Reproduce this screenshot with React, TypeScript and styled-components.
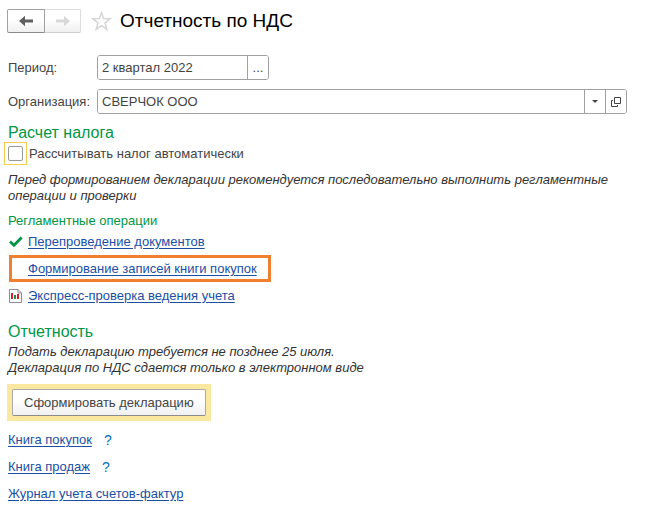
import React from "react";
import styled, { createGlobalStyle } from "styled-components";

const GlobalStyle = createGlobalStyle`
  * { box-sizing: border-box; }
  body {
    margin: 0;
    background: #fff;
    color: #444;
    font: 13px/16px "Liberation Sans", Arial, sans-serif;
  }
  button, input { font: inherit; color: inherit; }
`;

const Page = styled.main`
  padding: 9px 27px 5px 8px;
`;

const Header = styled.header`
  display: flex;
  align-items: center;
  height: 24px;
  margin: 0 0 22px -1px;
`;

const NavGroup = styled.div`
  display: flex;
  height: 24px;
  margin-right: 10px;
`;

const NavButton = styled.button<{ $side: "left" | "right" }>`
  display: flex;
  align-items: center;
  justify-content: center;
  width: ${(p) => (p.$side === "left" ? "38px" : "36px")};
  padding: 0;
  border: 1px solid ${(p) => (p.$side === "left" ? "#a0a0a0" : "#dcdcdc")};
  border-bottom-color: ${(p) => (p.$side === "left" ? "#8a8a8a" : "#d0d0d0")};
  border-left-width: ${(p) => (p.$side === "left" ? "1px" : "0")};
  border-radius: ${(p) => (p.$side === "left" ? "2px 0 0 2px" : "0 2px 2px 0")};
  background: linear-gradient(#fff 40%, #f0f0f0);
  color: ${(p) => (p.$side === "left" ? "#606060" : "#d8d8d8")};
`;

const StarButton = styled.button`
  display: flex;
  padding: 0;
  margin-right: 8px;
  border: 0;
  background: none;
`;

const Title = styled.h1`
  margin: 0;
  color: #000;
  font-size: 19px;
  font-weight: 400;
  line-height: 24px;
`;

const FieldRow = styled.div`
  display: grid;
  grid-template-columns: 89px minmax(0, 1fr);
  align-items: center;
  margin-bottom: 9px;
`;

const Field = styled.div<{ $width?: string }>`
  display: flex;
  width: ${(p) => p.$width ?? "100%"};
  height: 25px;
  border: 1px solid #a0a0a0;
  border-radius: 3px;
  overflow: hidden;
`;

const FieldInput = styled.input`
  flex: 1;
  min-width: 0;
  padding: 0 4px;
  border: 0;
  outline: 0;
  background: #fff;
`;

const FieldButton = styled.button`
  display: flex;
  align-items: center;
  justify-content: center;
  width: 21px;
  padding: 0;
  border: 0;
  border-left: 1px solid #a0a0a0;
  background: #fff;
`;

const Heading = styled.h2`
  margin: 0;
  color: #009646;
  font-size: 16px;
  font-weight: 400;
  line-height: 19px;
`;

const Subheading = styled.h3`
  margin: 9px 0 0;
  color: #009646;
  font-size: 13px;
  font-weight: 400;
  line-height: 15px;
`;

const CheckLabel = styled.label`
  display: flex;
  align-items: center;
  gap: 2px;
  margin-left: -4px;
`;

const CheckFrame = styled.span`
  display: flex;
  padding: 3px;
  border: 1px solid #f0cf50;
`;

const Checkbox = styled.input`
  appearance: none;
  width: 15px;
  height: 15px;
  margin: 0;
  border: 1px solid #999;
  border-radius: 2px;
  background: #fff;
  &:checked { background: #009646; }
`;

const Note = styled.p<{ $top: number }>`
  margin: ${(p) => p.$top}px 0 0;
  color: #333;
  font-style: italic;
`;

const List = styled.ul`
  list-style: none;
  margin: 0;
  padding: 0;
`;

const Operation = styled.li<{ $marked?: boolean }>`
  display: flex;
  align-items: center;
  width: fit-content;
  height: 27px;
  margin-left: 1px;
  padding: 0 ${(p) => (p.$marked ? 11 : 0)}px 0 ${(p) => (p.$marked ? 16 : 0)}px;
  border: ${(p) => (p.$marked ? "3px solid #f08030" : "0")};
`;

const IconCell = styled.span`
  display: flex;
  width: 19px;
`;

const Link = styled.a`
  color: #1a4fa3;
  text-decoration: underline;
  text-underline-offset: 2px;
`;

const Section = styled.section<{ $top: number }>`
  margin-top: ${(p) => p.$top}px;
`;

const ActionFrame = styled.div`
  width: fit-content;
  margin: 8px 0 5px -1px;
  padding: 5px;
  background: #fae7a0;
`;

const ActionButton = styled.button`
  display: block;
  height: 27px;
  padding: 0 11px;
  border: 1px solid #aaa;
  border-bottom-color: #8c8c8c;
  border-radius: 2px;
  background: linear-gradient(#fff 40%, #f0f0f0);
`;

const BookRow = styled.li`
  display: flex;
  align-items: center;
  gap: 12px;
  height: 27px;
`;

const HelpButton = styled.button`
  padding: 0;
  border: 0;
  background: none;
  color: #0070b4;
  font-size: 14px;
`;

const Arrow = ({ flip = false }: { flip?: boolean }) => (
  <svg width="14" height="12" viewBox="0 0 14 12" aria-hidden="true">
    <path
      transform={flip ? "matrix(-1 0 0 1 14 0)" : undefined}
      d="M0 6 L6 .8 V4.6 H14 V7.4 H6 V11.2 Z"
      fill="currentColor"
    />
  </svg>
);

const Star = () => (
  <svg width="21" height="20" viewBox="0 0 21 20" aria-hidden="true">
    <path
      d="M10.5 1.8 L12.6 7.6 L19 7.8 L14 11.8 L15.8 18.2 L10.5 14.6 L5.2 18.2 L7 11.8 L2 7.8 L8.4 7.6 Z"
      fill="#fff"
      stroke="#d6d6d6"
      strokeWidth="1.5"
    />
  </svg>
);

const Caret = () => (
  <svg width="6" height="3" viewBox="0 0 6 3" aria-hidden="true">
    <path d="M0 0 H6 L3 3 Z" fill="#444" />
  </svg>
);

const OpenIcon = () => (
  <svg width="10" height="10" viewBox="0 0 10 10" fill="none" stroke="#444" aria-hidden="true">
    <path d="M3.5 .5 H9.5 V6.5 H3.5 Z M2 3.5 H.5 V9.5 H6.5 V8" />
  </svg>
);

const Tick = () => (
  <svg width="14" height="12" viewBox="0 0 14 12" aria-hidden="true">
    <path d="M1 5.5 L5 9.2 L12.6 1.6" fill="none" stroke="#009646" strokeWidth="2.8" />
  </svg>
);

const Report = () => (
  <svg width="13" height="14" viewBox="0 0 13 14" aria-hidden="true">
    <path d="M.5 .5 H9 L12.5 4 V13.5 H.5 Z" fill="#fff" stroke="#8c8c96" />
    <path d="M9 .5 V4 H12.5" fill="none" stroke="#8c8c96" />
    <path d="M2 4 H4 V10 H2 Z M8 5 H10 V10 H8 Z" fill="#d9202a" />
    <path d="M5 6 H7 V10 H5 Z" fill="#179447" />
  </svg>
);

export default function App() {
  return (
    <>
      <GlobalStyle />
      <Page>
        <Header>
          <NavGroup>
            <NavButton type="button" $side="left" aria-label="Назад"><Arrow /></NavButton>
            <NavButton type="button" $side="right" aria-label="Вперед" disabled><Arrow flip /></NavButton>
          </NavGroup>
          <StarButton type="button" aria-label="Избранное"><Star /></StarButton>
          <Title>Отчетность по НДС</Title>
        </Header>

        <FieldRow>
          <label htmlFor="period">Период:</label>
          <Field $width="172px">
            <FieldInput id="period" defaultValue="2 квартал 2022" />
            <FieldButton type="button" aria-label="Выбрать период">...</FieldButton>
          </Field>
        </FieldRow>
        <FieldRow>
          <label htmlFor="organization">Организация:</label>
          <Field>
            <FieldInput id="organization" defaultValue="СВЕРЧОК ООО" />
            <FieldButton type="button" aria-label="Выбрать организацию"><Caret /></FieldButton>
            <FieldButton type="button" aria-label="Открыть"><OpenIcon /></FieldButton>
          </Field>
        </FieldRow>

        <Section $top={0}>
          <Heading>Расчет налога</Heading>
          <CheckLabel>
            <CheckFrame><Checkbox type="checkbox" /></CheckFrame>
            Рассчитывать налог автоматически
          </CheckLabel>
          <Note $top={7}>
            Перед формированием декларации рекомендуется последовательно выполнить регламентные операции и проверки
          </Note>
          <Subheading>Регламентные операции</Subheading>
          <List>
            <Operation>
              <IconCell><Tick /></IconCell>
              <Link href="#documents">Перепроведение документов</Link>
            </Operation>
            <Operation $marked>
              <Link href="#purchases">Формирование записей книги покупок</Link>
            </Operation>
            <Operation>
              <IconCell><Report /></IconCell>
              <Link href="#check">Экспресс-проверка ведения учета</Link>
            </Operation>
          </List>
        </Section>

        <Section $top={13}>
          <Heading>Отчетность</Heading>
          <Note $top={3}>
            Подать декларацию требуется не позднее 25 июля.
            <br />
            Декларация по НДС сдается только в электронном виде
          </Note>
          <ActionFrame>
            <ActionButton type="button">Сформировать декларацию</ActionButton>
          </ActionFrame>
          <List>
            <BookRow>
              <Link href="#purchase-book">Книга покупок</Link>
              <HelpButton type="button" aria-label="Справка: книга покупок">?</HelpButton>
            </BookRow>
            <BookRow>
              <Link href="#sales-book">Книга продаж</Link>
              <HelpButton type="button" aria-label="Справка: книга продаж">?</HelpButton>
            </BookRow>
            <BookRow>
              <Link href="#invoice-journal">Журнал учета счетов-фактур</Link>
            </BookRow>
          </List>
        </Section>
      </Page>
    </>
  );
}
